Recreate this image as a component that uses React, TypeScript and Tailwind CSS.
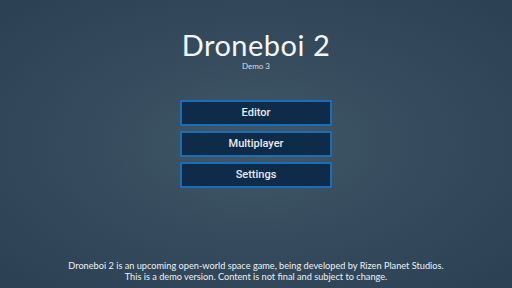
export default function App() {
  return (
    <div className="relative flex h-[288px] w-[512px] flex-col items-center overflow-hidden bg-[radial-gradient(ellipse_at_center,#3f5869_0%,#34495b_55%,#2b4052_100%)] text-white">
      <div className="mt-[27px] flex flex-col items-center">
        <h1 className="font-['Lato','DejaVu_Sans',sans-serif] text-[29px] leading-[36px] font-normal tracking-[0.5px] text-[#f4f6f8]">
          Droneboi 2
        </h1>
        <span className="-mt-[2px] font-['Lato',sans-serif] text-[8px] leading-[10px] text-[#d8dde2]">
          Demo 3
        </span>
      </div>

      <div className="mt-[29px] flex flex-col gap-[5px]">
        {["Editor", "Multiplayer", "Settings"].map((label) => (
          <button
            key={label}
            className="flex h-[26px] w-[152px] items-center justify-center border-2 border-[#1d6db5] bg-[#0e2c4a] font-['Roboto',sans-serif] text-[11px] font-medium text-[#e8ebee]"
          >
            {label}
          </button>
        ))}
      </div>

      <div className="mt-auto mb-[6px] text-center font-['Lato',sans-serif] text-[9.2px] leading-[11px] text-[#eef1f4]">
        <p>Droneboi 2 is an upcoming open-world space game, being developed by Rizen Planet Studios.</p>
        <p>This is a demo version. Content is not final and subject to change.</p>
      </div>
    </div>
  );
}
